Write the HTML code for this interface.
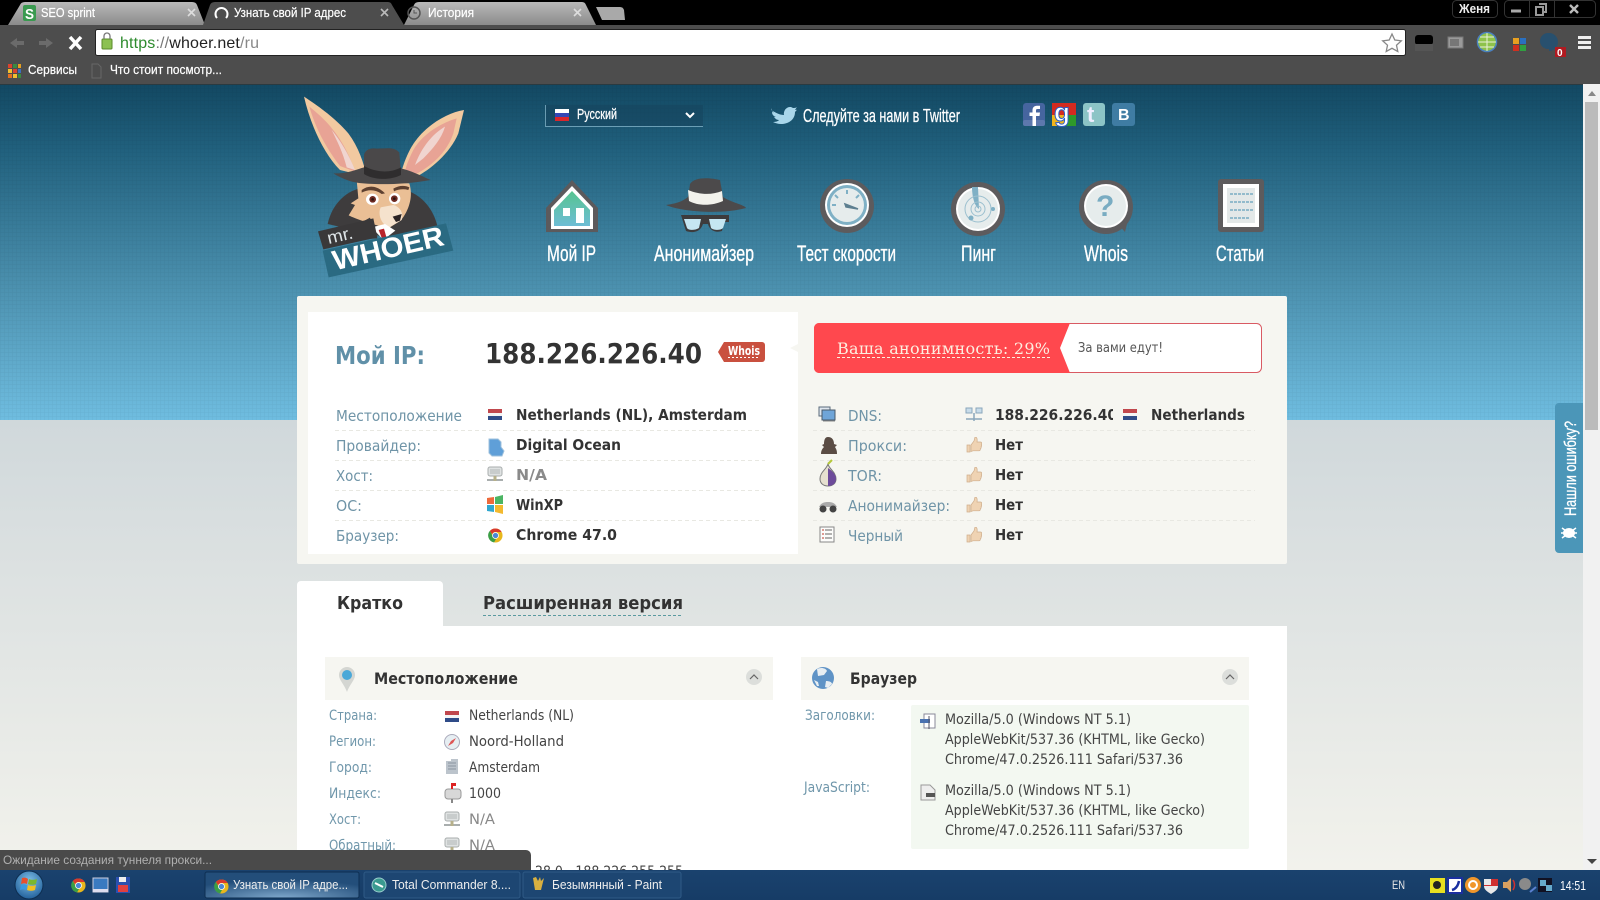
<!DOCTYPE html>
<html lang="ru"><head><meta charset="utf-8"><title>Whoer</title>
<style>
html,body{margin:0;padding:0;width:1600px;height:900px;overflow:hidden;background:#e4e8e8}
svg{display:block}
text{white-space:pre}
.l{font-family:"Liberation Sans",sans-serif}
.d{font-family:"DejaVu Sans",sans-serif}
.s{font-family:"DejaVu Serif",serif}
.lb{font-family:"DejaVu Sans",sans-serif;font-size:15px;fill:#6f94a7}
.v{font-family:"DejaVu Sans",sans-serif;font-size:15px;font-weight:700;fill:#333}
.sl{font-family:"DejaVu Sans",sans-serif;font-size:14px;fill:#7097ab}
.sv{font-family:"DejaVu Sans",sans-serif;font-size:14px;fill:#444}
.nav{font-family:"Liberation Sans",sans-serif;font-size:22px;fill:#fff;stroke:#fff;stroke-width:.35px}
.tb{font-family:"Liberation Sans",sans-serif;font-size:13px;fill:#eee}
.dash{stroke:#e8e8e2;stroke-width:1;stroke-dasharray:4 3}
</style></head><body>
<svg xmlns="http://www.w3.org/2000/svg" width="1600" height="900" viewBox="0 0 1600 900">
<defs>
<linearGradient id="hdr" x1="0" y1="0" x2="0" y2="1"><stop offset="0" stop-color="#124862"/><stop offset=".2" stop-color="#21617e"/><stop offset=".6" stop-color="#4b90ae"/><stop offset="1" stop-color="#6fbde0"/></linearGradient>
<linearGradient id="bg" x1="0" y1="0" x2="0" y2="1"><stop offset="0" stop-color="#d0d8db"/><stop offset=".33" stop-color="#dce1e1"/><stop offset="1" stop-color="#f2f2ec"/></linearGradient>
<linearGradient id="tabg" x1="0" y1="0" x2="0" y2="1"><stop offset="0" stop-color="#b9b9b9"/><stop offset="1" stop-color="#8b8b8b"/></linearGradient>
<linearGradient id="task" x1="0" y1="0" x2="0" y2="1"><stop offset="0" stop-color="#1a426e"/><stop offset="1" stop-color="#163c66"/></linearGradient>
<radialGradient id="btn" cx=".5" cy="1" r=".7"><stop offset="0" stop-color="#7fa8cc"/><stop offset="1" stop-color="#234e7a"/></radialGradient>
<radialGradient id="orb" cx=".5" cy=".35" r=".7"><stop offset="0" stop-color="#7fc0e8"/><stop offset="1" stop-color="#1c5a96"/></radialGradient>
<linearGradient id="house" x1="0" y1="0" x2="0" y2="1"><stop offset="0" stop-color="#56c48f"/><stop offset="1" stop-color="#6dbdd5"/></linearGradient>
<pattern id="grid" width="4" height="4" patternUnits="userSpaceOnUse"><path d="M4 0H0V4" fill="none" stroke="#000" stroke-opacity=".05"/></pattern>
<symbol id="nl" viewBox="0 0 14 11"><rect width="14" height="4" fill="#c0474d"/><rect y="4" width="14" height="3" fill="#f4f4f4"/><rect y="7" width="14" height="4" fill="#2f4c88"/></symbol>
<symbol id="thumb" viewBox="0 0 16 16"><path d="M1 8h3v7H1zM5 8l3-4 1-4c2 0 2.500 2 2 5h3.500c1.500 0 1.500 2 .8 2.500.6.700.5 2-.3 2.300.4.800.1 1.800-.7 2 .2 1-.3 2-1.300 2H7L5 14.500z" fill="#efd3b3" stroke="#cfae8c" stroke-width=".7"/></symbol>
<symbol id="host" viewBox="0 0 16 16"><rect x="1" y="1" width="14" height="9" rx="2" fill="#dfe2e2" stroke="#a9aeae"/><rect x="3" y="3" width="10" height="5" fill="#c8cccc"/><path d="M0 14h16" stroke="#a9aeae" stroke-width="2"/><rect x="6.500" y="10" width="3" height="5" fill="#b6b08a"/></symbol>
<symbol id="chrome" viewBox="0 0 16 16"><circle cx="8" cy="8" r="7.500" fill="#e8b71c"/><path d="M8 .5a7.500 7.500 0 0 1 6.500 3.700H8a3.800 3.800 0 0 0-3.600 2.600L2 3A7.500 7.500 0 0 1 8 .5z" fill="#d8392c"/><path d="M2 3l3 5.500a3.800 3.800 0 0 0 3.500 3.300L6.500 15.300A7.500 7.500 0 0 1 2 3z" fill="#3b9e46"/><circle cx="8" cy="8" r="3.600" fill="#fff"/><circle cx="8" cy="8" r="2.800" fill="#4a87d6"/></symbol>
<clipPath id="ipclip"><rect x="990" y="400" width="123" height="30"/></clipPath>
</defs>

<!-- page -->
<rect width="1600" height="420" fill="#d0d8db"/>
<rect y="420" width="1600" height="450" fill="url(#bg)"/>
<rect y="84" width="1583" height="336" fill="url(#hdr)"/>
<rect y="84" width="1583" height="336" fill="url(#grid)"/>

<!-- logo -->
<g transform="translate(290,90) scale(.33333)">
<path d="M42 20C75 42 130 78 175 130 205 170 222 220 230 260L150 240C100 190 60 100 42 20Z" fill="#f2c9a0"/>
<path d="M58 50C108 90 160 140 195 245L150 228C105 170 75 110 58 50Z" fill="#e8a395"/>
<path d="M125 120C150 150 175 190 195 240L170 232C160 190 140 150 125 120Z" fill="#f0d5d0"/>
<path d="M522 60C470 68 400 110 365 170 345 205 335 240 332 255L375 262C420 240 480 190 505 130Z" fill="#f2c9a0"/>
<path d="M500 85C450 100 395 135 370 180 355 210 345 235 345 250L378 252C420 230 470 190 490 130Z" fill="#e8a395"/>
<path d="M465 110C430 130 395 170 375 225L400 205C430 175 455 145 465 110Z" fill="#f0d5d0"/>
<path d="M113 402C125 345 165 305 210 295L360 305C405 325 432 365 442 408L300 445Z" fill="#3e3c3d"/>
<path d="M200 270L358 280C372 325 352 368 332 392L295 415C255 405 200 388 176 376L195 345 182 340 205 325Z" fill="#eabf95"/>
<path d="M272 352C262 375 275 405 298 412L335 390C342 370 330 350 310 345Z" fill="#f5e2cd"/>
<ellipse cx="247" cy="328" rx="19" ry="17" fill="#fff"/><circle cx="248" cy="328" r="10" fill="#6d2a22"/><circle cx="248" cy="328" r="4" fill="#2a1512"/>
<ellipse cx="314" cy="326" rx="17" ry="17" fill="#fff"/><circle cx="313" cy="326" r="10" fill="#6d2a22"/><circle cx="313" cy="326" r="4" fill="#2a1512"/>
<path d="M215 300C240 282 265 290 285 310L275 312C255 298 235 298 215 308ZM310 296C325 286 345 285 358 292L355 300C340 296 325 298 312 304Z" fill="#5d4030"/>
<path d="M308 380L335 372 330 392 318 396Z" fill="#2a2324"/>
<path d="M130 250C170 252 200 238 222 232L222 195C225 180 240 172 262 176 290 175 315 170 328 188L332 235C360 240 395 258 422 270 340 285 250 285 200 278 170 272 150 262 130 250Z" fill="#4a4849"/>
<path d="M222 228C260 248 300 250 333 232L333 255C300 272 250 270 222 252Z" fill="#2f2d2e"/>
<path d="M245 412L285 402 316 422 280 450Z" fill="#fff"/>
<path d="M266 420L282 416 292 452 280 456Z" fill="#b8232b"/>
<path d="M200 405L240 383 262 445 215 448Z" fill="#3e3c3d"/>
<path d="M84 424L250 385 262 442 100 478Z" fill="#3a3839"/>
<path d="M98 482L468 400 490 482 116 562Z" fill="#2a6a82"/>
<text class="l" transform="translate(116,462) rotate(-13)" font-size="52" fill="#dfe5e8" textLength="78" lengthAdjust="spacingAndGlyphs">mr.</text>
<text class="l" font-weight="700" transform="translate(135,541) rotate(-13)" font-size="84" fill="#fff" textLength="340" lengthAdjust="spacingAndGlyphs">WHOER</text>
</g>

<!-- language -->
<path d="M545 105V126H703V105Z" fill="#16435c" fill-opacity=".55"/>
<path d="M545.500 105V126.500H703" fill="none" stroke="#7fb0c6" stroke-opacity=".8"/>
<rect x="555" y="109" width="14" height="4" fill="#fff"/><rect x="555" y="113" width="14" height="4" fill="#3346b5"/><rect x="555" y="117" width="14" height="4" fill="#d8262c"/>
<text class="l" x="577" y="119" font-size="15" fill="#fff" stroke="#fff" stroke-width=".25" textLength="40" lengthAdjust="spacingAndGlyphs">Русский</text>
<path d="M686 113l4 4 4-4" fill="none" stroke="#fff" stroke-width="2"/>

<!-- twitter -->
<path d="M771 110c5 3 9 5 13 5-1-6 5-10 9-7 1 0 3 0 4-1l-2 3 2-.3-2 2.300c0 8-7 12-14 12-3 0-6-1-8-2 2 0 5-.5 6-2-3 0-4-2-5-3h2c-3-1-4-3-4-5l2 .5c-2-1-3-3-3-5z" fill="#a9d6ea"/>
<text class="l" x="803" y="122" font-size="18" fill="#fff" stroke="#fff" stroke-width=".25" textLength="157" lengthAdjust="spacingAndGlyphs">Следуйте за нами в Twitter</text>

<!-- social -->
<rect x="1023" y="103" width="22" height="23" rx="3" fill="#46659f"/><rect x="1023" y="120" width="22" height="6" rx="2" fill="#5d78ad"/>
<path d="M1036 126v-10h3.500l.5-3.500h-4v-2c0-1.200.6-1.500 1.700-1.500h2.300v-3.300h-3c-3 0-4.500 1.800-4.500 4.500v2.300h-3v3.500h3v10z" fill="#fff"/>
<rect x="1052" y="103" width="24" height="12" fill="#d42a20"/><rect x="1064" y="115" width="12" height="11" fill="#2e9a2a"/><rect x="1052" y="115" width="12" height="11" fill="#f0b51c"/>
<text class="l" x="1054" y="121" font-size="26" font-weight="700" fill="#fff" stroke="#2a5ec8" stroke-width="1">g</text>
<rect x="1083" y="103" width="22" height="23" rx="3" fill="#8cc4c6"/>
<text class="l" x="1087" y="122" font-size="22" font-weight="700" fill="#eef">t</text>
<rect x="1112" y="103" width="23" height="23" rx="3" fill="#3f7ca3"/>
<text class="l" x="1118" y="120" font-size="16" font-weight="700" fill="#fff">B</text>

<!-- nav icons -->
<path d="M572 180L598 208V232H546V208Z" fill="#5c5a5c"/>
<path d="M572 186L593 208V229H551V208Z" fill="#fff"/>
<path d="M572 191L590 210V226H554V210Z" fill="url(#house)"/>
<rect x="563" y="208" width="7" height="8" fill="#fff"/><rect x="576" y="208" width="8" height="15" fill="#fff"/>

<path d="M666 205C680 203 684 200 688 197L690 184C695 176 712 178 720 180L723 197C730 202 745 205 746 208 725 214 685 213 666 205Z" fill="#4c4a4b"/>
<path d="M688 190C700 195 712 195 722 191L723 201C712 206 698 206 689 201Z" fill="#f2f2ec"/>
<path d="M681 215H729V222H724L722 231C716 233 710 231 708 224H703C700 233 692 233 686 231Z" fill="#3d3b3c"/>
<path d="M684 219H701L699 228C694 231 688 230 687 228ZM709 219H726L723 228C720 231 713 230 711 228Z" fill="#c5e6f2"/>

<circle cx="847" cy="206" r="27" fill="#5d5b5d"/><circle cx="847" cy="205" r="22" fill="#fff"/><circle cx="847" cy="205" r="20" fill="#7fb0c5"/><circle cx="847" cy="205" r="17" fill="#e6ecec"/>
<path d="M845 204L858 209 846 207Z" fill="#5d7f90" stroke="#5d7f90" stroke-width="1.500"/>
<path d="M847 190v4M835 195l3 3M859 195l-3 3M832 205h4" stroke="#7fb0c5" stroke-width="2"/>

<circle cx="978" cy="209" r="27" fill="#5d5b5d"/><circle cx="978" cy="209" r="22" fill="#fff"/><circle cx="978" cy="209" r="20" fill="#e6ecec"/>
<path d="M978 187L979 209C973 205 972 192 972 187Z" fill="#7fb0c5"/>
<circle cx="978" cy="209" r="13" fill="none" stroke="#9cc0cf"/><circle cx="978" cy="209" r="7" fill="none" stroke="#9cc0cf"/><circle cx="978" cy="209" r="3" fill="none" stroke="#9cc0cf"/>
<circle cx="971" cy="218" r="2.500" fill="#7fb0c5"/><circle cx="993" cy="209" r="2" fill="#7fb0c5"/>

<circle cx="1106" cy="207" r="27" fill="#5d5b5d"/><path d="M1118 224L1128 220 1125 232Z" fill="#5d5b5d"/>
<circle cx="1106" cy="206" r="22" fill="#fff"/><circle cx="1106" cy="206" r="20" fill="#e6ecec"/>
<text class="l" x="1096" y="216" font-size="30" font-weight="700" fill="#79acc2">?</text>

<rect x="1218" y="179" width="46" height="53" rx="3" fill="#5d5b5d"/><rect x="1223" y="184" width="36" height="43" fill="#fff"/><rect x="1227" y="188" width="28" height="35" fill="#e3e8e8"/>
<path d="M1230 194h23M1230 202h23M1230 210h23M1230 218h19" stroke="#79acc2" stroke-width="1.500" stroke-dasharray="3 1"/>

<text class="nav" x="547" y="261" textLength="49" lengthAdjust="spacingAndGlyphs">Мой IP</text>
<text class="nav" x="654" y="261" textLength="100" lengthAdjust="spacingAndGlyphs">Анонимайзер</text>
<text class="nav" x="797" y="261" textLength="99" lengthAdjust="spacingAndGlyphs">Тест скорости</text>
<text class="nav" x="961" y="261" textLength="35" lengthAdjust="spacingAndGlyphs">Пинг</text>
<text class="nav" x="1084" y="261" textLength="44" lengthAdjust="spacingAndGlyphs">Whois</text>
<text class="nav" x="1216" y="261" textLength="48" lengthAdjust="spacingAndGlyphs">Статьи</text>

<!-- IP panel -->
<rect x="297" y="296" width="990" height="268" rx="2" fill="#f6f6f1"/>
<path d="M308 312H798V344L790 348 798 352V554H308Z" fill="#fff"/>
<text class="d" x="335" y="364" font-size="25" font-weight="700" fill="#6090a8" textLength="90" lengthAdjust="spacingAndGlyphs">Мой IP:</text>
<text class="d" x="485" y="363" font-size="28" font-weight="700" fill="#333" textLength="217" lengthAdjust="spacingAndGlyphs">188.226.226.40</text>
<path d="M724 342H762a3 3 0 0 1 3 3V359a3 3 0 0 1-3 3H724L718 352Z" fill="#c9503f"/>
<text class="d" x="728" y="355" font-size="12" font-weight="700" fill="#fff" textLength="32" lengthAdjust="spacingAndGlyphs">Whois</text>
<path d="M728 357.500H760" stroke="#fff" stroke-dasharray="2 2"/>

<path class="dash" d="M335 430.500H765M335 460.500H765M335 490.500H765M335 520.500H765"/>
<text class="lb" x="336" y="421" textLength="126" lengthAdjust="spacingAndGlyphs">Местоположение</text>
<text class="lb" x="336" y="451" textLength="85" lengthAdjust="spacingAndGlyphs">Провайдер:</text>
<text class="lb" x="336" y="481" textLength="37" lengthAdjust="spacingAndGlyphs">Хост:</text>
<text class="lb" x="336" y="511" textLength="26" lengthAdjust="spacingAndGlyphs">ОС:</text>
<text class="lb" x="336" y="541" textLength="63" lengthAdjust="spacingAndGlyphs">Браузер:</text>
<use href="#nl" x="488" y="409" width="14" height="11"/>
<path d="M489 439h9l3 3v5l3 4-2 5h-10l-3-3z" fill="#5f9fd8" stroke="#9fc1dc"/>
<use href="#host" x="487" y="466" width="16" height="16"/>
<path d="M487 498l7-1v7h-7z" fill="#ee6a3b"/><path d="M495 497l8-2v9h-8z" fill="#4bb563"/><path d="M487 505h7v7l-7-1z" fill="#30a7cf"/><path d="M495 505h8v9l-8-2z" fill="#f3b92e"/>
<use href="#chrome" x="488" y="528" width="15" height="15"/>
<text class="v" x="516" y="420" textLength="231" lengthAdjust="spacingAndGlyphs">Netherlands (NL), Amsterdam</text>
<text class="v" x="516" y="450" textLength="105" lengthAdjust="spacingAndGlyphs">Digital Ocean</text>
<text class="v" x="516" y="480" style="fill:#8a8a8a" textLength="31" lengthAdjust="spacingAndGlyphs">N/A</text>
<text class="v" x="516" y="510" textLength="47" lengthAdjust="spacingAndGlyphs">WinXP</text>
<text class="v" x="516" y="540" textLength="101" lengthAdjust="spacingAndGlyphs">Chrome 47.0</text>

<!-- anonymity -->
<rect x="814.500" y="323.500" width="447" height="49" rx="5" fill="#fff" stroke="#d95a63"/>
<path d="M819 323H1070L1060 348 1070 373H819a5 5 0 0 1-5-5V328a5 5 0 0 1 5-5Z" fill="#ff484e"/>
<text class="s" x="837" y="354" font-size="16" fill="#fdeee0" textLength="213" lengthAdjust="spacing">Ваша анонимность: 29%</text>
<path d="M837 357.500H1050" stroke="#fdeee0" stroke-dasharray="3 2"/>
<text class="d" x="1078" y="352" font-size="13" fill="#555" textLength="85" lengthAdjust="spacingAndGlyphs">За вами едут!</text>

<path class="dash" d="M813 430.500H1255M813 460.500H1255M813 490.500H1255M813 520.500H1255"/>
<!-- right icons -->
<rect x="819" y="407" width="11" height="9" fill="#dfe6ee" stroke="#5a6a7a"/><rect x="822" y="410" width="13" height="10" fill="#6fa5d8" stroke="#4a5a6a"/><path d="M823 421h12" stroke="#888"/>
<path d="M828 437c4 0 6 3 6 7l3 1-2 2c2 3 2 5 2 7h-16c0-3 1-5 3-7l-2-2 2-1c0-4 1-7 4-7z" fill="#5a4c44"/>
<path d="M828 464c1 5 8 8 8 15 0 4-3 7-8 7s-8-3-8-7c0-7 6-9 8-15z" fill="#e6e0d0" stroke="#777"/><path d="M828 468c4 3 8 6 8 11 0 4-3 7-8 7z" fill="#6d4b9a"/><path d="M828 464l4-4" stroke="#b5c83a" stroke-width="2"/>
<path d="M819 507c2-4 5-5 9-5s7 1 9 5z" fill="#aaa"/><circle cx="823" cy="509" r="3.500" fill="#444"/><circle cx="833" cy="509" r="3.500" fill="#444"/>
<rect x="820" y="527" width="14" height="15" fill="#fdfdfb" stroke="#888"/><path d="M825 530h7M825 534h7M825 538h7" stroke="#666"/><path d="M822 530h2M822 534h2M822 538h2" stroke="#c0392b"/>
<text class="lb" x="848" y="421" textLength="34" lengthAdjust="spacingAndGlyphs">DNS:</text>
<text class="lb" x="848" y="451" textLength="59" lengthAdjust="spacingAndGlyphs">Прокси:</text>
<text class="lb" x="848" y="481" textLength="34" lengthAdjust="spacingAndGlyphs">TOR:</text>
<text class="lb" x="848" y="511" textLength="102" lengthAdjust="spacingAndGlyphs">Анонимайзер:</text>
<text class="lb" x="848" y="541" textLength="55" lengthAdjust="spacingAndGlyphs">Черный</text>
<rect x="966" y="408" width="6" height="5" fill="#c8dcea" stroke="#8aa6bb"/><rect x="976" y="408" width="6" height="5" fill="#c8dcea" stroke="#8aa6bb"/><path d="M966 419h16M974 413v8" stroke="#8aa6bb" stroke-width="1.500"/>
<use href="#thumb" x="966" y="437" width="16" height="16"/>
<use href="#thumb" x="966" y="467" width="16" height="16"/>
<use href="#thumb" x="966" y="497" width="16" height="16"/>
<use href="#thumb" x="966" y="527" width="16" height="16"/>
<g clip-path="url(#ipclip)"><text class="v" x="995" y="420" textLength="122" lengthAdjust="spacingAndGlyphs">188.226.226.40</text></g>
<use href="#nl" x="1123" y="409" width="14" height="11"/>
<text class="v" x="1151" y="420" textLength="94" lengthAdjust="spacingAndGlyphs">Netherlands</text>
<text class="v" x="995" y="450" textLength="28" lengthAdjust="spacingAndGlyphs">Нет</text>
<text class="v" x="995" y="480" textLength="28" lengthAdjust="spacingAndGlyphs">Нет</text>
<text class="v" x="995" y="510" textLength="28" lengthAdjust="spacingAndGlyphs">Нет</text>
<text class="v" x="995" y="540" textLength="28" lengthAdjust="spacingAndGlyphs">Нет</text>

<!-- tabs -->
<path d="M297 626V585a4 4 0 0 1 4-4H439a4 4 0 0 1 4 4V626Z" fill="#fff"/>
<rect x="297" y="626" width="990" height="250" fill="#fff"/>
<text class="d" x="337" y="609" font-size="18" font-weight="700" fill="#333" textLength="66" lengthAdjust="spacingAndGlyphs">Кратко</text>
<text class="d" x="483" y="609" font-size="18" font-weight="700" fill="#333" textLength="200" lengthAdjust="spacingAndGlyphs">Расширенная версия</text>
<path d="M483 615.500H683" stroke="#5a9aa0" stroke-dasharray="3 2"/>

<!-- location -->
<rect x="325" y="657" width="448" height="43" fill="#f6f6f1"/>
<path d="M347 692C344 684 339 680 339 675a8 8 0 0 1 16 0c0 5-5 9-8 17z" fill="#d4d6d2"/><circle cx="347" cy="675" r="5" fill="#4aa8d8"/>
<text class="d" x="374" y="684" font-size="16" font-weight="700" fill="#333" textLength="144" lengthAdjust="spacingAndGlyphs">Местоположение</text>
<circle cx="754" cy="677" r="8" fill="#dcdedb"/><path d="M750 679l4-4 4 4" fill="none" stroke="#666" stroke-width="1.200"/>
<text class="sl" x="329" y="720" textLength="48" lengthAdjust="spacingAndGlyphs">Страна:</text>
<text class="sl" x="329" y="746" textLength="47" lengthAdjust="spacingAndGlyphs">Регион:</text>
<text class="sl" x="329" y="772" textLength="43" lengthAdjust="spacingAndGlyphs">Город:</text>
<text class="sl" x="329" y="798" textLength="52" lengthAdjust="spacingAndGlyphs">Индекс:</text>
<text class="sl" x="329" y="824" textLength="32" lengthAdjust="spacingAndGlyphs">Хост:</text>
<text class="sl" x="329" y="850" textLength="67" lengthAdjust="spacingAndGlyphs">Обратный:</text>
<use href="#nl" x="445" y="711" width="14" height="11"/>
<circle cx="452" cy="742" r="7.500" fill="#e6eef2" stroke="#aab"/><path d="M456 738l-5 3-3 5 5-3z" fill="#d55"/>
<path d="M446 761h5v-2h7v15h-12z" fill="#bcc4cc"/><path d="M448 763h8M448 766h8M448 769h8" stroke="#8a94a0"/>
<rect x="445" y="789" width="16" height="10" rx="3" fill="#d8d8d8" stroke="#999"/><rect x="451" y="799" width="2" height="4" fill="#888"/><path d="M451 789v-6h5v3h-3v3z" fill="#d22"/>
<use href="#host" x="444" y="811" width="16" height="16"/>
<use href="#host" x="444" y="837" width="16" height="16"/>
<text class="sv" x="469" y="720" textLength="105" lengthAdjust="spacingAndGlyphs">Netherlands (NL)</text>
<text class="sv" x="469" y="746" textLength="95" lengthAdjust="spacingAndGlyphs">Noord-Holland</text>
<text class="sv" x="469" y="772" textLength="71" lengthAdjust="spacingAndGlyphs">Amsterdam</text>
<text class="sv" x="469" y="798" textLength="32" lengthAdjust="spacingAndGlyphs">1000</text>
<text class="sv" x="469" y="824" style="fill:#888" textLength="26" lengthAdjust="spacingAndGlyphs">N/A</text>
<text class="sv" x="469" y="850" style="fill:#888" textLength="26" lengthAdjust="spacingAndGlyphs">N/A</text>
<text class="sv" x="535" y="876" textLength="148" lengthAdjust="spacingAndGlyphs">28.0 - 188.226.255.255</text>

<!-- browser -->
<rect x="801" y="657" width="448" height="43" fill="#f6f6f1"/>
<circle cx="823" cy="678" r="11" fill="#5f93c6"/><path d="M817 669c4-2 9-1 10 2l-3 4-6 1zM826 681c3 0 6 1 6 3l-4 4-3-1zM814 680l4 2 1 4-2 0z" fill="#e8eef2"/>
<text class="d" x="850" y="684" font-size="16" font-weight="700" fill="#333" textLength="67" lengthAdjust="spacingAndGlyphs">Браузер</text>
<circle cx="1230" cy="677" r="8" fill="#dcdedb"/><path d="M1226 679l4-4 4 4" fill="none" stroke="#666" stroke-width="1.200"/>
<text class="sl" x="805" y="720" textLength="70" lengthAdjust="spacingAndGlyphs">Заголовки:</text>
<text class="sl" x="804" y="792" textLength="66" lengthAdjust="spacingAndGlyphs">JavaScript:</text>
<rect x="911" y="705" width="338" height="144" rx="2" fill="#f3f8f1"/>
<rect x="924" y="714" width="11" height="14" fill="#fff" stroke="#889"/><rect x="920" y="719" width="10" height="4" fill="#4a72b0"/><path d="M929 716v13" stroke="#556"/>
<path d="M921 785h9l5 5v10h-14z" fill="#eee" stroke="#999"/><rect x="926" y="793" width="9" height="4" fill="#555"/>
<text class="sv" x="945" y="724" textLength="186" lengthAdjust="spacingAndGlyphs">Mozilla/5.0 (Windows NT 5.1)</text>
<text class="sv" x="945" y="744" textLength="260" lengthAdjust="spacingAndGlyphs">AppleWebKit/537.36 (KHTML, like Gecko)</text>
<text class="sv" x="945" y="764" textLength="238" lengthAdjust="spacingAndGlyphs">Chrome/47.0.2526.111 Safari/537.36</text>
<text class="sv" x="945" y="795" textLength="186" lengthAdjust="spacingAndGlyphs">Mozilla/5.0 (Windows NT 5.1)</text>
<text class="sv" x="945" y="815" textLength="260" lengthAdjust="spacingAndGlyphs">AppleWebKit/537.36 (KHTML, like Gecko)</text>
<text class="sv" x="945" y="835" textLength="238" lengthAdjust="spacingAndGlyphs">Chrome/47.0.2526.111 Safari/537.36</text>

<!-- feedback tab -->
<path d="M1583 403H1559a4 4 0 0 0-4 4V549a4 4 0 0 0 4 4H1583Z" fill="#4b96b8"/>
<text class="l" transform="translate(1576,516) rotate(-90)" font-size="17" fill="#fff" stroke="#fff" stroke-width=".3" textLength="95" lengthAdjust="spacingAndGlyphs">Нашли ошибку?</text>
<ellipse cx="1569" cy="533" rx="6" ry="5" fill="#fff"/><path d="M1562 528l14 10M1576 528l-14 10M1561 533h16" stroke="#fff" stroke-width="1.500"/>

<!-- scrollbar -->
<rect x="1583" y="84" width="17" height="786" fill="#f1f1f1"/>
<rect x="1585" y="102" width="13" height="328" fill="#bbb"/>
<path d="M1588 96l4-5 4 5z" fill="#888"/>
<path d="M1587 859h10l-5 5z" fill="#444"/>

<!-- chrome frame -->
<rect width="1600" height="25" fill="#000"/>
<rect y="25" width="1600" height="59" fill="#4d4d4d"/>
<path d="M8 25L20 5Q21 2 25 2H192Q196 2 197 5L205 25Z" fill="url(#tabg)"/>
<path d="M404 25L414 5Q415 2 419 2H582Q585 2 586 5L596 25Z" fill="url(#tabg)"/>
<path d="M203 25L210 5Q211 2 215 2H388Q391 2 392 5L404 25Z" fill="#4d4d4d"/>
<path d="M596 7H620Q623 7 624 10L625 20H602Z" fill="#a9a9a9"/>
<rect x="23" y="5" width="13" height="16" rx="2" fill="#3a9a50"/>
<text class="l" x="25" y="19" font-size="15" font-weight="700" fill="#fff" textLength="9" lengthAdjust="spacingAndGlyphs">S</text>
<text class="l" x="41" y="17" font-size="13" fill="#fff" stroke="#fff" stroke-width=".2" textLength="54" lengthAdjust="spacingAndGlyphs">SEO sprint</text>
<path d="M188 9l7 7M195 9l-7 7" stroke="#ddd" stroke-width="1.600"/>
<path d="M217 18a6 6 0 1 1 9 0" fill="none" stroke="#fff" stroke-width="2"/>
<text class="l" x="234" y="17" font-size="13" fill="#fff" stroke="#fff" stroke-width=".2" textLength="112" lengthAdjust="spacingAndGlyphs">Узнать свой IP адрес</text>
<path d="M381 9l7 7M388 9l-7 7" stroke="#bbb" stroke-width="1.600"/>
<circle cx="414" cy="13" r="6" fill="none" stroke="#555" stroke-width="1.500"/><path d="M414 10v3h3" fill="none" stroke="#555"/>
<text class="l" x="428" y="17" font-size="13" fill="#fff" stroke="#fff" stroke-width=".2" textLength="46" lengthAdjust="spacingAndGlyphs">История</text>
<path d="M574 9l7 7M581 9l-7 7" stroke="#ddd" stroke-width="1.600"/>

<rect x="1452.500" y=".5" width="45" height="17" rx="4" fill="#000" stroke="#333"/>
<text class="l" x="1459" y="13" font-size="13" font-weight="700" fill="#eee" textLength="31" lengthAdjust="spacingAndGlyphs">Женя</text>
<rect x="1504.500" y=".5" width="91" height="17" rx="4" fill="#000" stroke="#333"/>
<path d="M1529.500 0v17M1554.500 0v17" stroke="#333"/>
<path d="M1511 11h10" stroke="#aaa" stroke-width="3"/>
<path d="M1536 7h7v8h-7zM1539 4h7v8h-2" fill="none" stroke="#999" stroke-width="2"/>
<path d="M1570 5l8 8M1578 5l-8 8" stroke="#bbb" stroke-width="2.400"/>

<path d="M17 38l-7 5 7 5v-3h7v-4h-7z" fill="#6b6b6b"/><path d="M46 38l7 5-7 5v-3h-7v-4h7z" fill="#6b6b6b"/>
<path d="M70 37l11 12M81 37L70 49" stroke="#fff" stroke-width="3.500"/>
<rect x="95.500" y="29.500" width="1310" height="26" rx="2" fill="#fff" stroke="#222"/>
<rect x="102" y="39" width="10" height="10" rx="1" fill="#8cc152" stroke="#5a8a2a"/><path d="M104 39v-3a3 3 0 0 1 6 0v3" fill="none" stroke="#777" stroke-width="1.300"/>
<text class="l" x="120" y="48" font-size="16" fill="#999" textLength="139" lengthAdjust="spacing"><tspan fill="#2e8b2e">https</tspan><tspan fill="#777">://</tspan><tspan fill="#222">whoer.net</tspan><tspan fill="#888">/ru</tspan></text>
<path d="M1392 34l2.800 6 6.500.8-4.800 4.400 1.300 6.300-5.800-3.200-5.800 3.200 1.300-6.300-4.800-4.400 6.500-.8z" fill="#fff" stroke="#888" stroke-width="1.300"/>
<rect x="1415" y="35" width="18" height="10" rx="3" fill="#000"/><rect x="1415" y="44" width="18" height="7" fill="#555"/>
<rect x="1448" y="37" width="15" height="11" fill="#9a9a9a" stroke="#777"/><rect x="1450" y="39" width="9" height="7" fill="#777"/>
<circle cx="1487" cy="42" r="9.500" fill="#8ec24a" stroke="#4a80c0" stroke-width="1.500"/><path d="M1478 42h18M1487 33v18M1480 37h14M1480 47h14" stroke="#e8f0d8"/>
<rect x="1513" y="38" width="6" height="6" fill="#e8a020"/><rect x="1520" y="38" width="6" height="6" fill="#2a70c0"/><rect x="1513" y="45" width="6" height="6" fill="#d03020"/><rect x="1520" y="45" width="6" height="6" fill="#30a040"/>
<path d="M1549 33a9 9 0 0 1 0 18z" fill="#28506e"/><circle cx="1548" cy="41" r="8" fill="#28506e"/>
<rect x="1555" y="47" width="11" height="10" fill="#b01a20"/>
<text class="l" x="1557" y="56" font-size="10" font-weight="700" fill="#fff">0</text>
<rect x="1578" y="36" width="13" height="3" fill="#eee"/><rect x="1578" y="41" width="13" height="3" fill="#eee"/><rect x="1578" y="46" width="13" height="3" fill="#eee"/>

<rect x="8" y="64" width="4" height="4" fill="#d9432f"/><rect x="13" y="64" width="4" height="4" fill="#3a8a40"/><rect x="18" y="64" width="3" height="4" fill="#e6a020"/>
<rect x="8" y="69" width="4" height="4" fill="#f2c030"/><rect x="13" y="69" width="4" height="4" fill="#d9432f"/><rect x="18" y="69" width="3" height="4" fill="#3a70c0"/>
<rect x="8" y="74" width="4" height="4" fill="#e67020"/><rect x="13" y="74" width="4" height="4" fill="#f2c030"/><rect x="18" y="74" width="3" height="4" fill="#3a8a40"/>
<text class="l" x="28" y="74" font-size="12.500" fill="#fff" stroke="#fff" stroke-width=".2" textLength="49" lengthAdjust="spacingAndGlyphs">Сервисы</text>
<path d="M92 64h6l3 3v11h-9z" fill="none" stroke="#666"/>
<text class="l" x="110" y="74" font-size="12.500" fill="#fff" stroke="#fff" stroke-width=".2" textLength="112" lengthAdjust="spacingAndGlyphs">Что стоит посмотр...</text>
<path d="M0 84.500H1583" stroke="#2a3a40"/>

<!-- status -->
<path d="M0 850H526a5 5 0 0 1 5 5V871H0Z" fill="#4a4a4a"/>
<text class="l" x="3" y="864" font-size="12" fill="#b0b0b0" textLength="209" lengthAdjust="spacingAndGlyphs">Ожидание создания туннеля прокси...</text>

<!-- taskbar -->
<rect y="870" width="1600" height="30" fill="url(#task)"/>
<circle cx="29" cy="885" r="14" fill="url(#orb)" stroke="#0e2f52"/>
<path d="M22 878c3-1 5 0 6 1l-1 5c-2-1-4-1-6 0z" fill="#e8502c"/><path d="M29 879c2 1 5 1 8 0l-1 5c-3 1-5 1-8 0z" fill="#7ab82e"/><path d="M21 885c2-1 4-1 6 0l-1 5c-2-1-4-1-6 0z" fill="#3a9ae0"/><path d="M28 885c2 1 5 1 8 0l-1 5c-3 1-5 1-8 0z" fill="#f2c020"/>
<use href="#chrome" x="71" y="878" width="15" height="15"/>
<rect x="93" y="878" width="15" height="14" fill="#3a7ac0" stroke="#ccd"/><rect x="93" y="889" width="15" height="3" fill="#dde"/>
<rect x="116" y="877" width="14" height="16" fill="#2a50b0"/><rect x="119" y="877" width="7" height="5" fill="#eee"/><rect x="118" y="885" width="10" height="7" fill="#e04040"/>
<rect x="205" y="872" width="154" height="26" rx="2" fill="url(#btn)" stroke="#0e2f52"/>
<rect x="364" y="872" width="156" height="26" rx="2" fill="#1d4672" stroke="#2f5a86"/>
<rect x="523" y="872" width="158" height="26" rx="2" fill="#1d4672" stroke="#2f5a86"/>
<use href="#chrome" x="214" y="879" width="15" height="15"/>
<circle cx="379" cy="885" r="7" fill="#3a9a90" stroke="#9cc"/><path d="M375 883l8 4" stroke="#fff" stroke-width="2"/>
<path d="M533 878l2 12h6l3-12-3 3-1-4-2 4-2-4z" fill="#d8b040"/>
<text class="tb" x="233" y="889" textLength="115" lengthAdjust="spacingAndGlyphs">Узнать свой IP адре...</text>
<text class="tb" x="392" y="889" textLength="119" lengthAdjust="spacingAndGlyphs">Total Commander 8....</text>
<text class="tb" x="552" y="889" textLength="110" lengthAdjust="spacingAndGlyphs">Безымянный - Paint</text>
<text class="l" x="1392" y="889" font-size="12" fill="#e8e8e8" textLength="13" lengthAdjust="spacingAndGlyphs">EN</text>
<rect x="1430" y="878" width="15" height="15" fill="#e8e020"/><circle cx="1437" cy="885" r="4" fill="#222"/>
<rect x="1448" y="878" width="14" height="15" fill="#fff" stroke="#1a2fa0" stroke-width="2"/><path d="M1452 890c4-1 6-4 7-9" stroke="#1a2fa0" stroke-width="2.500" fill="none"/>
<circle cx="1473" cy="885" r="8" fill="#f0962a"/><circle cx="1473" cy="885" r="4" fill="none" stroke="#fff" stroke-width="2"/>
<path d="M1484 879h14v7c0 4-4 6-7 8-3-2-7-4-7-8z" fill="#e8e8e8"/><path d="M1491 879h7v7h-14v-1h7z" fill="#d03030"/>
<path d="M1503 882h4l4-4v14l-4-4h-4z" fill="#d8a060"/><path d="M1513 880c2 3 2 7 0 10" stroke="#d03030" fill="none" stroke-width="1.500"/>
<circle cx="1525" cy="884" r="6" fill="#8a8a8a"/><path d="M1530 892l6-5" stroke="#5a80d0" stroke-width="2"/>
<rect x="1538" y="878" width="14" height="14" fill="#112"/><rect x="1540" y="880" width="6" height="6" fill="#6ac"/><rect x="1546" y="885" width="6" height="6" fill="#6ac"/>
<text class="l" x="1560" y="890" font-size="13" fill="#fff" textLength="26" lengthAdjust="spacingAndGlyphs">14:51</text>
</svg>
</body></html>
